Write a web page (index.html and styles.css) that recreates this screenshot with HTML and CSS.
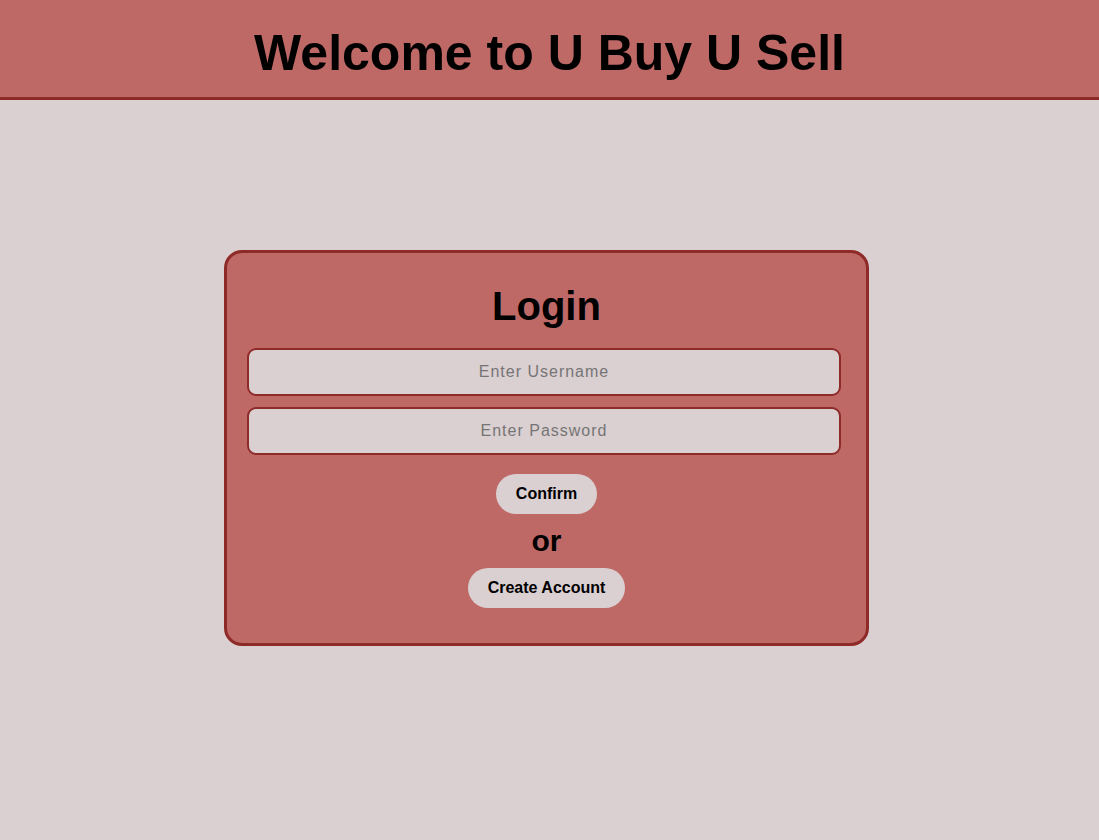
FILE: index.html
```html
<!DOCTYPE html>
<html lang="en">
<head>
<meta charset="utf-8">
<title>U Buy U Sell - Login</title>
<link rel="stylesheet" href="styles.css">
</head>
<body>
<header class="site-header">
  <h1 class="site-title">Welcome to U Buy U Sell</h1>
</header>
<main class="page">
  <form class="login-card" onsubmit="return false;">
    <h2 class="login-title">Login</h2>
    <input class="field" type="text" placeholder="Enter Username">
    <input class="field field-second" type="password" placeholder="Enter Password">
    <button class="pill-btn confirm-btn" type="submit">Confirm</button>
    <p class="or-text">or</p>
    <button class="pill-btn" type="button">Create Account</button>
  </form>
</main>
</body>
</html>
```

FILE: styles.css
```css
* { box-sizing: border-box; }

html, body {
  margin: 0;
  padding: 0;
}

body {
  background: #dacfd1;
  font-family: "Liberation Sans", Arial, sans-serif;
  color: #000;
  min-height: 840px;
}

.site-header {
  background: #bf6967;
  border-bottom: 3px solid #8e2a27;
  padding: 24px 0 15px;
  text-align: center;
}

.site-title {
  margin: 0;
  font-size: 50px;
  line-height: 58px;
  font-weight: 700;
}

.page {
  padding-top: 150px;
}

.login-card {
  width: 645px;
  margin-left: calc(50% - 325.5px);
  background: #bf6967;
  border: 3px solid #8e2a27;
  border-radius: 18px;
  padding: 30px 20px 35px 20px;
  display: flex;
  flex-direction: column;
  align-items: center;
}

.login-title {
  margin: 0;
  font-size: 40px;
  line-height: 46px;
  font-weight: 700;
}

.field {
  width: 594px;
  height: 48px;
  align-self: flex-start;
  margin-top: 19px;
  background: #dacfd1;
  border: 2px solid #8e2a27;
  border-radius: 9px;
  font-family: "Liberation Sans", Arial, sans-serif;
  font-size: 16px;
  letter-spacing: 1px;
  text-align: center;
  color: #333;
  outline: none;
}

.field-second {
  margin-top: 11px;
}

.field::placeholder {
  color: #757575;
}

.pill-btn {
  height: 40px;
  padding: 0 20px;
  border: none;
  border-radius: 20px;
  background: #dacfd1;
  font-family: "Liberation Sans", Arial, sans-serif;
  font-size: 16px;
  font-weight: 700;
  color: #000;
  cursor: pointer;
}

.confirm-btn {
  margin-top: 19px;
}

.or-text {
  margin: 8px 0 9px;
  font-size: 30px;
  line-height: 37px;
  font-weight: 700;
}
```
